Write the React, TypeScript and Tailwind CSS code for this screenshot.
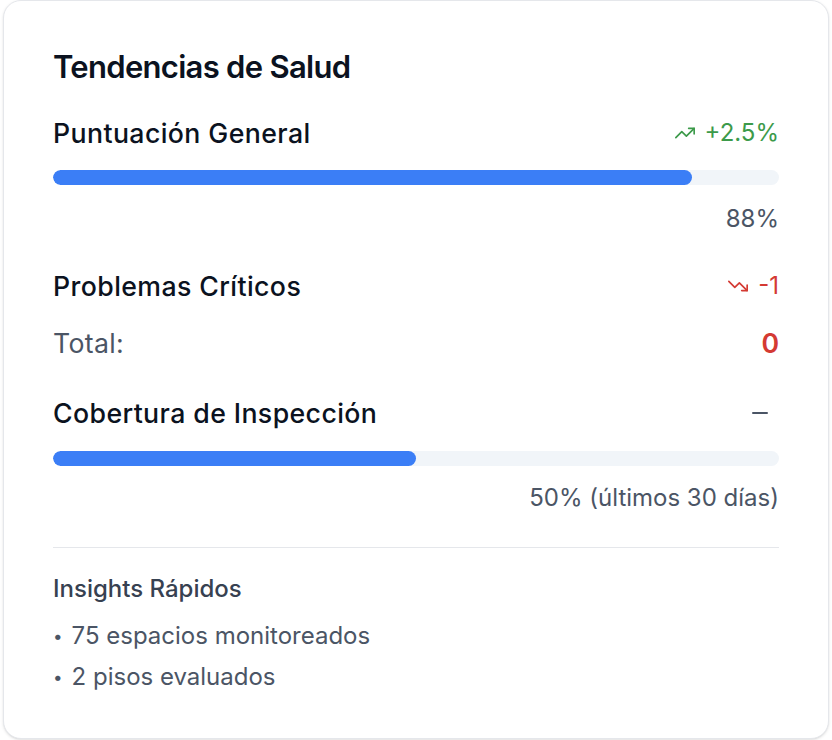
import React from 'react';
import { TrendingUp, TrendingDown } from 'lucide-react';

const Bar = ({ value }: { value: number }) => (
  <div className="h-[15px] w-full rounded-full bg-[#f1f5f9] overflow-hidden">
    <div className="h-full rounded-full bg-[#3b7ef6]" style={{ width: `${value}%` }} />
  </div>
);

export default function App() {
  return (
    <div className="min-h-screen bg-white px-[3px] font-['Inter',sans-serif]">
      <div className="h-[739px] rounded-[18px] border border-[#e5e7eb] bg-white px-[49px] pt-[46px] shadow-sm">
        <h2 className="text-[31px] font-semibold leading-[40px] tracking-[-0.7px] text-[#0b1220]">
          Tendencias de Salud
        </h2>

        {/* Puntuación */}
        <div className="mt-[28px] flex items-center justify-between">
          <span className="text-[26.7px] font-medium leading-[36px] tracking-[0.4px] text-[#0b1220]">Puntuación General</span>
          <span className="flex items-center gap-[9px] text-[24px] leading-[32px] text-[#3c9a4a]">
            <TrendingUp className="h-[22px] w-[22px]" strokeWidth={1.8} />
            +2.5%
          </span>
        </div>
        <div className="mt-[19px]">
          <Bar value={88} />
        </div>
        <div className="mt-[18px] text-right text-[24px] leading-[32px] text-[#4b5565]">88%</div>

        {/* Problemas */}
        <div className="mt-[33px] flex items-center justify-between">
          <span className="text-[26.7px] font-medium leading-[36px] tracking-[0.4px] text-[#0b1220]">Problemas Críticos</span>
          <span className="flex items-center gap-[9px] text-[24px] leading-[32px] text-[#d43a33]">
            <TrendingDown className="h-[22px] w-[22px]" strokeWidth={1.8} />
            -1
          </span>
        </div>
        <div className="mt-[21px] flex items-center justify-between">
          <span className="text-[26.7px] leading-[36px] tracking-[0.3px] text-[#4b5565]">Total:</span>
          <span className="text-[26.7px] font-semibold leading-[36px] text-[#d43a33]">0</span>
        </div>

        {/* Cobertura */}
        <div className="mt-[34px] flex items-center justify-between">
          <span className="text-[26.7px] font-medium leading-[36px] tracking-[0.4px] text-[#0b1220]">Cobertura de Inspección</span>
          <span className="mr-[11px] h-[2px] w-[16px] rounded-full bg-[#4b5565]" />
        </div>
        <div className="mt-[20px]">
          <Bar value={50} />
        </div>
        <div className="mt-[16px] text-right text-[24px] leading-[32px] text-[#4b5565]">50% (últimos 30 días)</div>

        <div className="mt-[33px] border-t border-[#e5e7eb] pt-[25px]">
          <div className="text-[24px] font-medium leading-[32px] text-[#374151]">Insights Rápidos</div>
          <ul className="mt-[15px] space-y-[9px] text-[24px] leading-[32px] text-[#4b5565]">
            <li>
              <span className="mr-[9px] text-[17px] align-[2px]">•</span>75 espacios monitoreados
            </li>
            <li>
              <span className="mr-[9px] text-[17px] align-[2px]">•</span>2 pisos evaluados
            </li>
          </ul>
        </div>
      </div>
    </div>
  );
}
